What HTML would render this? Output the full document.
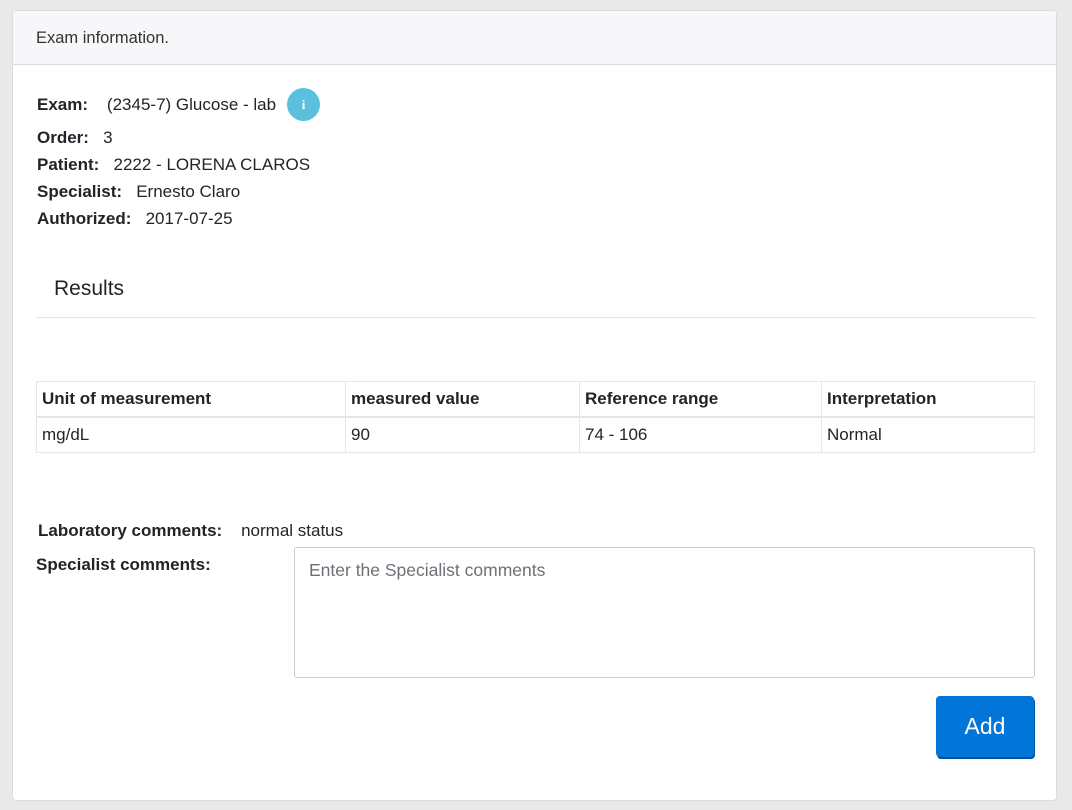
<!DOCTYPE html>
<html><head><style>
body{margin:0;background:#e9e9e9;font-family:"Liberation Sans",sans-serif;color:#212529;}
.card{position:absolute;left:12px;top:10px;width:1043px;height:789px;background:#fff;border:1px solid #dcdcdc;border-radius:4px;}
.hdr{position:absolute;left:0;top:0;right:0;height:53px;background:#f7f7f9;border-bottom:1px solid #dcdcdc;}
.t{position:absolute;white-space:nowrap;font-size:17px;}
b{font-weight:bold;}
table{position:absolute;left:23px;top:370px;width:999px;border-collapse:collapse;font-size:17px;}
td,th{border:1px solid #e6e6e6;text-align:left;padding:0 5px;height:34px;}
th{border-bottom:2px solid #e6e6e6;}
</style></head><body>
<div class="card">
<div class="hdr"><div class="t" style="left:23px;top:18px;font-size:16.5px;color:#333">Exam information.</div></div>
<div class="t" style="left:24px;top:84px"><b>Exam:</b>&nbsp;&nbsp;&nbsp; (2345-7) Glucose - lab</div>
<div style="position:absolute;left:274px;top:77px;width:33px;height:33px;border-radius:50%;background:#5bc0de;color:#fff;font:bold 13px 'Liberation Serif',serif;text-align:center;line-height:33px">i</div>
<div class="t" style="left:24px;top:117px"><b>Order:</b>&nbsp;&nbsp; 3</div>
<div class="t" style="left:24px;top:144px"><b>Patient:</b>&nbsp;&nbsp; 2222 - LORENA CLAROS</div>
<div class="t" style="left:24px;top:171px"><b>Specialist:</b>&nbsp;&nbsp; Ernesto Claro</div>
<div class="t" style="left:24px;top:198px"><b>Authorized:</b>&nbsp;&nbsp; 2017-07-25</div>
<div class="t" style="left:41px;top:266px;font-size:21px">Results</div>
<div style="position:absolute;left:23px;top:306px;width:999px;height:1px;background:#e5e5e5"></div>
<table><tr><th style="width:298px">Unit of measurement</th><th style="width:223px">measured value</th><th style="width:231px">Reference range</th><th>Interpretation</th></tr>
<tr><td>mg/dL</td><td>90</td><td>74 - 106</td><td>Normal</td></tr></table>
<div class="t" style="left:25px;top:510px"><b>Laboratory comments:</b>&nbsp;&nbsp;&nbsp; normal status</div>
<div class="t" style="left:23px;top:544px"><b>Specialist comments:</b></div>
<div style="position:absolute;left:281px;top:536px;width:739px;height:129px;border:1px solid #ccc;border-radius:3px"></div>
<div class="t" style="left:296px;top:549px;color:#6b7177;font-size:17.5px">Enter the Specialist comments</div>
<div style="position:absolute;left:923px;top:685px;width:98px;height:61px;background:#0275d8;border-radius:4px;box-shadow:1px 2px 0 #01549b;color:#fff;font-size:23px;text-align:center;line-height:61px">Add</div>
</div>
</body></html>
